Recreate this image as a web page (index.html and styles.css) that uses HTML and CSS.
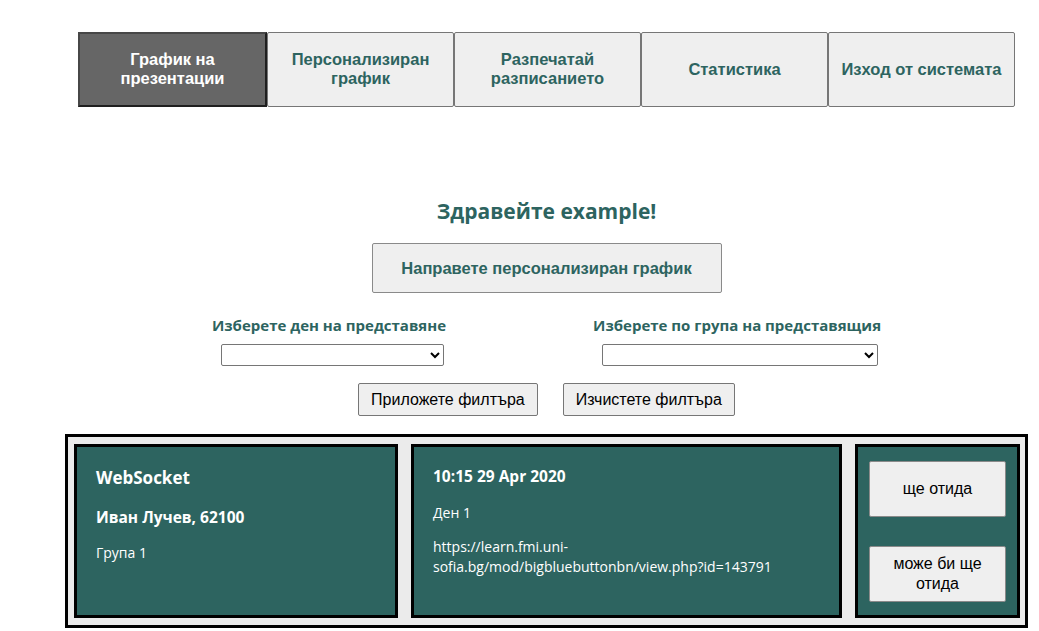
FILE: index.html
```html
<!DOCTYPE html>
<html lang="bg">
<head>
<meta charset="utf-8">
<title>График</title>
<link rel="stylesheet" href="styles.css">
</head>
<body>
<div class="wrap">
  <nav class="nav">
    <button class="nav-btn active">График на презентации</button>
    <button class="nav-btn">Персонализиран график</button>
    <button class="nav-btn">Разпечатай разписанието</button>
    <button class="nav-btn">Статистика</button>
    <button class="nav-btn">Изход от системата</button>
  </nav>

  <h1 class="hello">Здравейте example!</h1>
  <div class="center">
    <button class="big-btn">Направете персонализиран график</button>
  </div>

  <div class="filters">
    <div class="filter f1">
      <label class="flabel">Изберете ден на представяне</label>
      <select class="sel s1"><option></option></select>
    </div>
    <div class="filter f2">
      <label class="flabel">Изберете по група на представящия</label>
      <select class="sel s2"><option></option></select>
    </div>
  </div>

  <div class="actions">
    <button class="act">Приложете филтъра</button>
    <button class="act">Изчистете филтъра</button>
  </div>

  <div class="list">
    <div class="card c1">
      <div class="title">WebSocket</div>
      <div class="name">Иван Лучев, 62100</div>
      <div class="txt">Група 1</div>
    </div>
    <div class="card c2">
      <div class="name">10:15 29 Apr 2020</div>
      <div class="txt day">Ден 1</div>
      <div class="txt url">https://learn.fmi.uni-sofia.bg/mod/bigbluebuttonbn/view.php?id=143791</div>
    </div>
    <div class="card c3">
      <button class="go">ще отида</button>
      <button class="go">може би ще отида</button>
    </div>
  </div>
</div>
</body>
</html>
```

FILE: styles.css
```css
html, body { margin: 0; padding: 0; background: #fff; }
body { font-family: "Liberation Sans", Arial, sans-serif; }

.wrap {
  width: 963px;
  margin-left: 65px;
}

.nav {
  display: flex;
  margin: 32px 13px 0 13px;
}
.nav-btn {
  flex: 1 1 0;
  height: 75px;
  background: #efefef;
  border: 1px solid #767676;
  border-radius: 2px;
  font-family: "Liberation Sans", Arial, sans-serif;
  font-weight: bold;
  font-size: 16.5px;
  line-height: 19px;
  color: #2d6460;
  padding: 0 6px 1px 6px;
  margin: 0;
}
.nav-btn.active {
  background: #666;
  color: #fff;
  border: 2px solid;
  border-color: #474747 #1f1f1f #1f1f1f #474747;
  border-radius: 0;
}

.hello {
  margin: 89px 0 0 0;
  text-align: center;
  font-family: "Open Sans", sans-serif;
  font-weight: bold;
  font-size: 21px;
  line-height: 30px;
  color: #2d6460;
}

.center { display: flex; justify-content: center; margin-top: 17px; }
.big-btn {
  width: 350px;
  height: 50px;
  background: #efefef;
  border: 1px solid #8a8a8a;
  border-radius: 2px;
  font-family: "Liberation Sans", Arial, sans-serif;
  font-weight: bold;
  font-size: 16.5px;
  color: #2d6460;
}

.filters {
  display: flex;
  justify-content: center;
  gap: 147px;
  margin-top: 22px;
}
.filter { display: flex; flex-direction: column; align-items: center; }
.flabel {
  font-family: "Open Sans", sans-serif;
  font-weight: bold;
  font-size: 15px;
  line-height: 20px;
  color: #2d6460;
}
.sel {
  margin-top: 9px;
  height: 22px;
  background: #fff;
  border: 1px solid #767676;
  border-radius: 2px;
  font-size: 14px;
}
.s1 { width: 223px; margin-left: 7px; }
.s2 { width: 276px; margin-left: 5px; }

.actions {
  display: flex;
  justify-content: center;
  gap: 25px;
  margin-top: 17px;
}
.act {
  height: 33px;
  padding: 0 12px;
  background: #efefef;
  border: 1px solid #767676;
  border-radius: 2px;
  font-family: "Liberation Sans", Arial, sans-serif;
  font-size: 16px;
  color: #000;
}

.list {
  display: flex;
  align-items: flex-start;
  gap: 13px;
  margin-top: 18px;
  border: 3px solid #000;
  background: #ebebeb;
  padding: 7px 6px;
}
.card {
  flex: 0 0 auto;
  background: #2d6460;
  border: 3px solid #000;
  color: #fff;
  font-family: "Open Sans", sans-serif;
  box-sizing: border-box;
  height: 174px;
}
.c1 { width: 324px; padding: 19px 19px; }
.c2 { width: 431px; padding: 19px 19px; }
.c3 {
  width: 165px;
  padding: 14px 11px 0 11px;
  display: flex;
  flex-direction: column;
  gap: 29px;
}
.title { font-weight: bold; font-size: 17px; line-height: 24px; }
.name { font-weight: bold; font-size: 15.5px; line-height: 20px; }
.c1 .name { margin-top: 17px; }
.txt { font-size: 14px; line-height: 20px; margin-top: 16px; }
.c2 .day { margin-top: 17px; }
.c2 .url { margin-top: 14px; overflow-wrap: anywhere; }

.go {
  flex: 0 0 56px;
  height: 56px;
  background: #efefef;
  border: 1px solid #8a8a8a;
  border-radius: 2px;
  font-family: "Liberation Sans", Arial, sans-serif;
  font-size: 16px;
  line-height: 20px;
  color: #000;
  padding: 0 20px;
}
```
